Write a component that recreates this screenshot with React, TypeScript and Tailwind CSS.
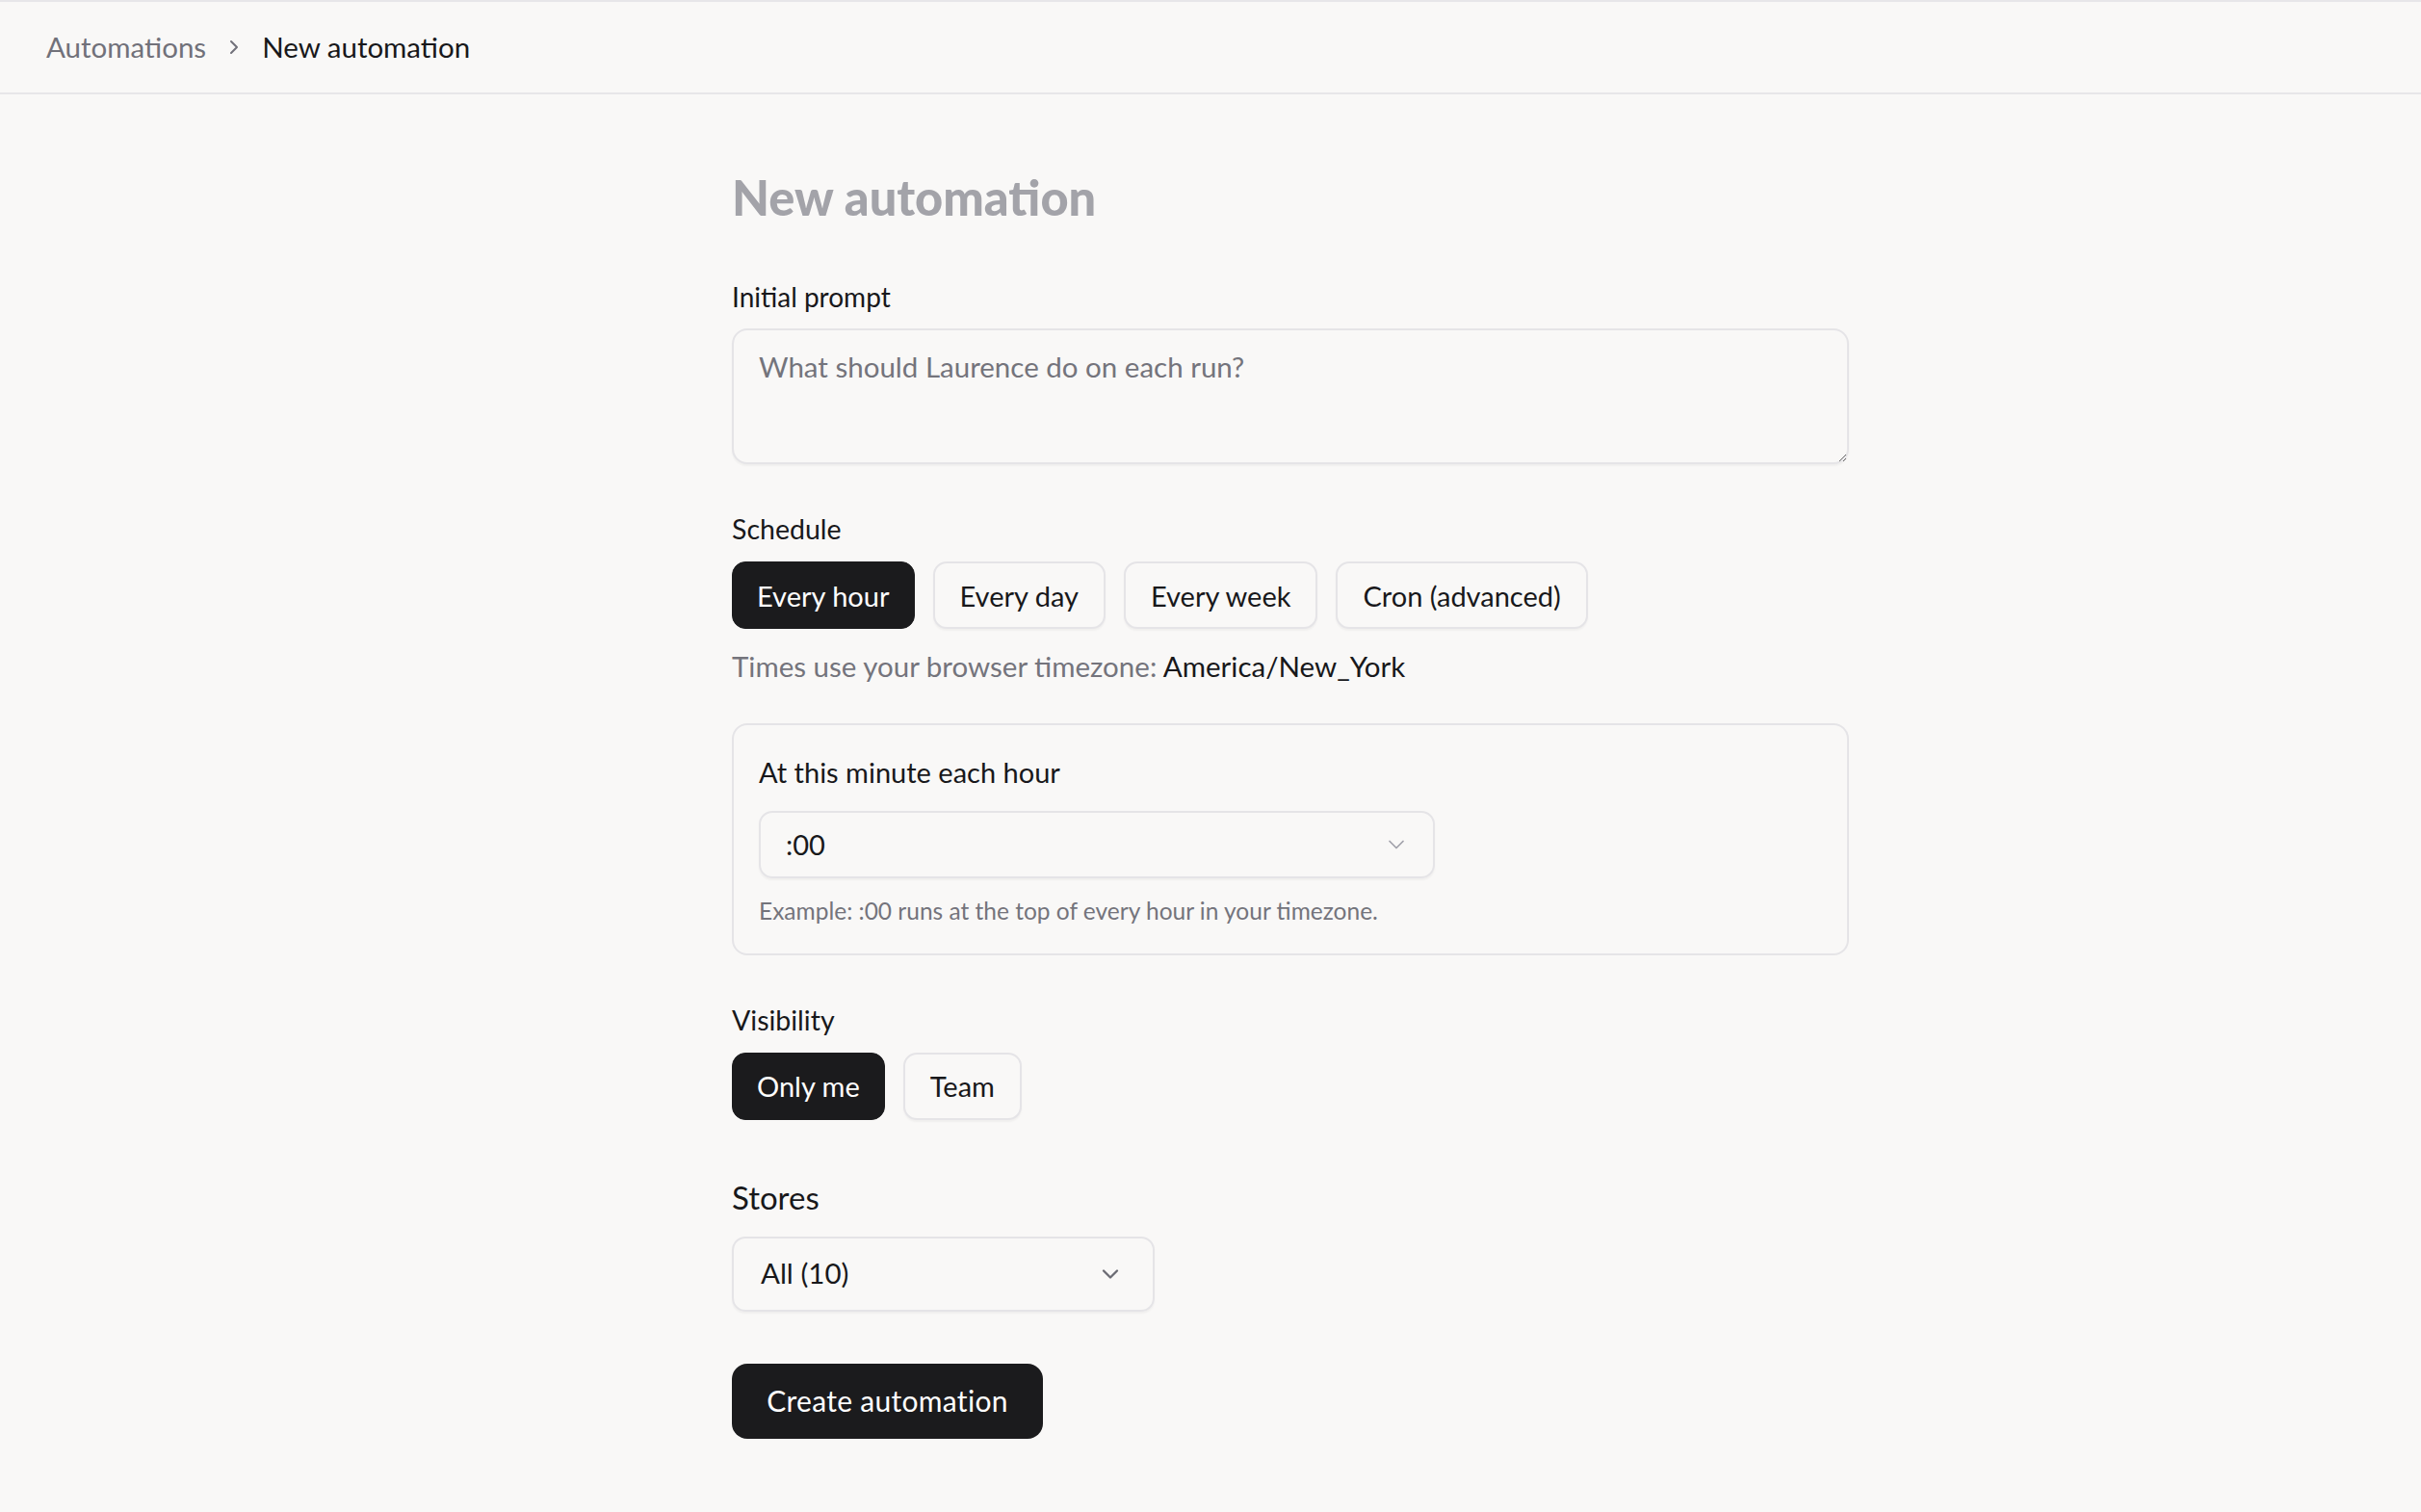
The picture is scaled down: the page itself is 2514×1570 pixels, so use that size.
import React, { FC, useState } from "react";
import { ChevronDown, ChevronRight } from "lucide-react";

const schedules = ["Every hour", "Every day", "Every week", "Cron (advanced)"];
const visibilities = ["Only me", "Team"];

const Pill: FC<{ label: string; active: boolean; onClick: () => void }> = ({
  label,
  active,
  onClick,
}) => (
  <button
    onClick={onClick}
    className={
      active
        ? "h-[70px] px-[25px] rounded-[14px] bg-[#1b1b1d] text-white text-[29px] leading-none border border-[#1b1b1d]"
        : "h-[70px] px-[26px] rounded-[14px] bg-[#f9f8f7] text-[#18181b] text-[29px] leading-none border-2 border-[#e5e4e7] shadow-[0_2px_2px_rgba(0,0,0,0.04)]"
    }
  >
    {label}
  </button>
);

const App: FC = () => {
  const [schedule, setSchedule] = useState("Every hour");
  const [visibility, setVisibility] = useState("Only me");

  return (
    <div className="min-h-[1570px] bg-[#f9f8f7] text-[#18181b] font-['Lato',_sans-serif]">
      <header className="h-[98px] border-t-2 border-b-2 border-[#e7e6e9] flex items-center px-[48px] gap-[17px] text-[29.5px] leading-none">
        <span className="text-[#71717a]">Automations</span>
        <ChevronRight className="w-[24px] h-[24px] text-[#71717a]" strokeWidth={2} />
        <span className="text-[#18181b]">New automation</span>
      </header>

      <main className="ml-[760px] w-[1160px] pt-[82px] pb-[60px]">
        <h1 className="text-[50.5px] leading-none font-black text-[#a3a3a9]">
          New automation
        </h1>

        {/* prompt */}
        <label className="block mt-[63px] text-[28px] leading-none">Initial prompt</label>
        <textarea
          placeholder="What should Laurence do on each run?"
          className="mt-[19px] block w-full h-[141px] rounded-[16px] border-2 border-[#e5e4e7] bg-[#f9f8f7] px-[26px] py-[18px] text-[29.5px] leading-[40px] placeholder:text-[#74747c] outline-none shadow-[0_2px_2px_rgba(0,0,0,0.04)]"
        />

        {/* schedule */}
        <div className="mt-[53px] text-[28.5px] leading-none">Schedule</div>
        <div className="mt-[20px] flex gap-[19px]">
          {schedules.map((s) => (
            <Pill key={s} label={s} active={s === schedule} onClick={() => setSchedule(s)} />
          ))}
        </div>
        <p className="mt-[24px] text-[29.5px] leading-none text-[#74747c]">
          Times use your browser timezone: <span className="text-[#18181b]">America/New_York</span>
        </p>

        <div className="mt-[44px] rounded-[16px] border-2 border-[#e5e4e7] px-[26px] pt-[34px] pb-[32px]">
          <div className="text-[29px] leading-none">At this minute each hour</div>
          <button className="mt-[26px] w-[702px] h-[70px] rounded-[14px] border-2 border-[#e5e4e7] flex items-center justify-between pl-[26px] pr-[24px] text-[29px] shadow-[0_2px_2px_rgba(0,0,0,0.04)]">
            <span>:00</span>
            <ChevronDown className="w-[28px] h-[28px] text-[#a1a1aa]" strokeWidth={1.5} />
          </button>
          <p className="mt-[22px] text-[24.5px] leading-none text-[#74747c]">
            Example: :00 runs at the top of every hour in your timezone.
          </p>
        </div>

        {/* visibility */}
        <div className="mt-[53px] text-[28.5px] leading-none">Visibility</div>
        <div className="mt-[19px] flex gap-[19px]">
          {visibilities.map((v) => (
            <Pill key={v} label={v} active={v === visibility} onClick={() => setVisibility(v)} />
          ))}
        </div>

        {/* stores */}
        <div className="mt-[64px] text-[33px] leading-none">Stores</div>
        <button className="mt-[24px] w-[439px] h-[78px] rounded-[14px] border-2 border-[#e5e4e7] flex items-center justify-between pl-[28px] pr-[30px] text-[29.5px] shadow-[0_2px_2px_rgba(0,0,0,0.04)]">
          <span>All (10)</span>
          <ChevronDown className="w-[28px] h-[28px] text-[#6b6b73]" strokeWidth={2} />
        </button>

        <button className="mt-[54px] block h-[78px] w-[323px] rounded-[16px] bg-[#1b1b1d] text-white text-[30px] tracking-[0.3px]">
          Create automation
        </button>
      </main>
    </div>
  );
};

export default App;
